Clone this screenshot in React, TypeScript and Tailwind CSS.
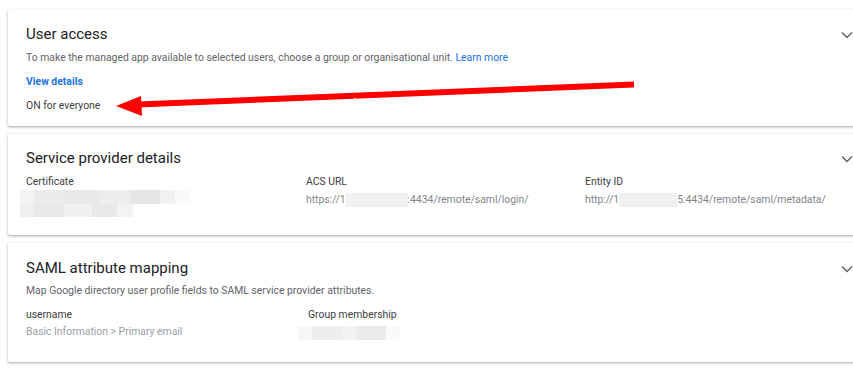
import React from "react";

const font = { fontFamily: "Roboto, 'Liberation Sans', sans-serif" };

function Chevron() {
  return (
    <svg width="12" height="8" viewBox="0 0 12 8" className="absolute right-[1px]" fill="none">
      <polyline points="1,1.5 6,6.5 11,1.5" stroke="#5f6368" strokeWidth="1.4" />
    </svg>
  );
}

function Card({ children, className }: { children: React.ReactNode; className: string }) {
  return (
    <section
      className={
        "relative w-[860px] bg-white rounded-[2px] pl-[18px] shadow-[0_1px_2px_0_rgba(60,64,67,0.3),0_1px_3px_1px_rgba(60,64,67,0.12)] " +
        className
      }
    >
      {children}
    </section>
  );
}

function Blur({ w, c }: { w: number; c: string }) {
  return <span className="inline-block h-[14px] align-middle" style={{ width: w, background: c }} />;
}

export default function App() {
  return (
    <div className="relative w-[853px] h-[386px] overflow-hidden bg-white text-[#202124]" style={font}>
      <div className="flex flex-col gap-2 pt-[10px] pl-2">
        {/* User access */}
        <Card className="h-[116px] pt-[14px]">
          <div className="relative flex items-center">
            <h2 className="text-[15px] leading-[20px] text-[#202124]">User access</h2>
            <div className="absolute right-[14px] top-[7px]">
              <Chevron />
            </div>
          </div>
          <p className="mt-[4px] text-[10.4px] leading-[20px] text-[#5f6368]">
            To make the managed app available to selected users, choose a group or organisational unit.{" "}
            <span className="text-[#1a73e8]">Learn more</span>
          </p>
          <p className="mt-[4px] text-[10.4px] leading-[20px] font-bold text-[#1a73e8]">View details</p>
          <p className="mt-[4px] text-[10.4px] leading-[20px] text-[#3c4043]">ON for everyone</p>
        </Card>

        {/* Service provider details */}
        <Card className="h-[101px] pt-[14px]">
          <div className="relative flex items-center">
            <h2 className="text-[15px] leading-[20px]">Service provider details</h2>
            <div className="absolute right-[14px] top-[7px]">
              <Chevron />
            </div>
          </div>
          <div className="mt-[4px] grid grid-cols-[280px_279px_1fr] text-[10.4px]">
            <div>
              <div className="leading-[20px] text-[#3c4043]">Certificate</div>
              <div className="mt-[-2px] ml-[-6px] flex flex-col">
                <div className="flex h-[14px]">
                  <div className="w-[14px] bg-[#f3f3f3]" />
                  <div className="w-[30px] bg-[#ebebeb]" />
                  <div className="w-[36px] bg-[#e9e9e9]" />
                  <div className="w-[30px] bg-[#eeeeee]" />
                  <div className="w-[30px] bg-[#e6e6e6]" />
                  <div className="w-[15px] bg-[#f1f1f1]" />
                  <div className="w-[15px] bg-[#fafafa]" />
                </div>
                <div className="flex h-[13px]">
                  <div className="w-[14px] bg-[#efefef]" />
                  <div className="w-[30px] bg-[#e8e8e8]" />
                  <div className="w-[28px] bg-[#f0f0f0]" />
                  <div className="w-[25px] bg-[#e8e8e8]" />
                  <div className="w-[16px] bg-[#f3f3f3]" />
                </div>
              </div>
            </div>
            <div>
              <div className="leading-[20px] text-[#3c4043]">ACS URL</div>
              <div className="leading-[16px] text-[#80868b] whitespace-nowrap">
                https://1<Blur w={62} c="#f1f1f1" />:4434/remote/saml/login/
              </div>
            </div>
            <div>
              <div className="leading-[20px] text-[#3c4043]">Entity ID</div>
              <div className="leading-[16px] text-[#80868b] whitespace-nowrap">
                http://1<Blur w={58} c="#f0f0f0" />5:4434/remote/saml/metadata/
              </div>
            </div>
          </div>
        </Card>

        {/* SAML attribute mapping */}
        <Card className="h-[119px] pt-[15px]">
          <div className="relative flex items-center">
            <h2 className="text-[15px] leading-[20px]">SAML attribute mapping</h2>
            <div className="absolute right-[14px] top-[7px]">
              <Chevron />
            </div>
          </div>
          <p className="mt-[3px] text-[10.4px] leading-[20px] text-[#5f6368]">
            Map Google directory user profile fields to SAML service provider attributes.
          </p>
          <div className="mt-[4px] grid grid-cols-[272px_1fr] text-[10.4px]">
            <div>
              <div className="leading-[20px] text-[#3c4043]">username</div>
              <div className="mt-[-1px] leading-[16px] text-[#9aa0a6]">Basic Information &gt; Primary email</div>
            </div>
            <div>
              <div className="pl-[10px] leading-[20px] text-[#3c4043]">Group membership</div>
              <div className="mt-[1px] flex h-[14px]">
                <div className="w-[14px] bg-[#f7f7f7]" />
                <div className="w-[30px] bg-[#ededed]" />
                <div className="w-[14px] bg-[#f2f2f2]" />
                <div className="w-[30px] bg-[#ebebeb]" />
                <div className="w-[14px] bg-[#fafafa]" />
              </div>
            </div>
          </div>
        </Card>
      </div>

      {/* red annotation arrow */}
      <svg className="absolute left-0 top-0 pointer-events-none" width="853" height="386">
        <line x1="138" y1="104.5" x2="634" y2="84.5" stroke="#ff0000" strokeWidth="6" />
        <polygon points="116,106 141,96 142,116" fill="#ff0000" />
        <rect x="354" y="98" width="2" height="2" fill="#f7d774" />
      </svg>
    </div>
  );
}
